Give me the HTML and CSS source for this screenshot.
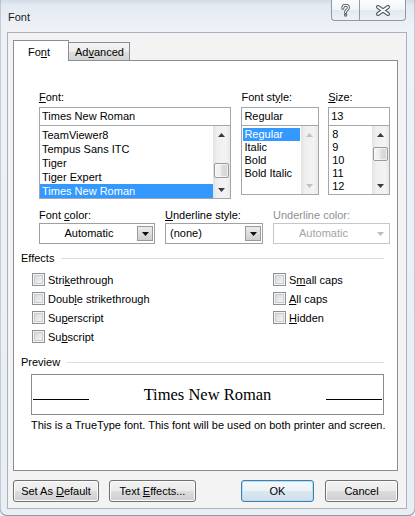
FILE: index.html
```html
<!DOCTYPE html>
<html>
<head>
<meta charset="utf-8">
<title>Font</title>
<link rel="stylesheet" href="styles.css">
</head>
<body>
<div class="window">
  <div class="titlebar">
    <span class="title">Font</span>
    <div class="caption">
      <div class="cbtn help">
        <svg width="9" height="13" viewBox="0 0 9 13">
          <path d="M1.8 4.2 C1.8 2.2 3 1.3 4.6 1.3 C6.3 1.3 7.4 2.3 7.4 3.8 C7.4 5.3 6 5.8 5.2 6.6 C4.7 7.1 4.6 7.6 4.6 8.4" fill="none" stroke="#56606c" stroke-width="3" stroke-linecap="round"/>
          <circle cx="4.6" cy="11" r="1.7" fill="#56606c"/>
          <path d="M1.8 4.2 C1.8 2.2 3 1.3 4.6 1.3 C6.3 1.3 7.4 2.3 7.4 3.8 C7.4 5.3 6 5.8 5.2 6.6 C4.7 7.1 4.6 7.6 4.6 8.4" fill="none" stroke="#ffffff" stroke-width="1.1" stroke-linecap="round"/>
          <circle cx="4.6" cy="11" r="0.6" fill="#ffffff"/>
        </svg>
      </div>
      <div class="cbtn close">
        <svg width="16" height="11" viewBox="0 0 16 11">
          <path d="M3 2 L13 9 M13 2 L3 9" fill="none" stroke="#56606c" stroke-width="4" stroke-linecap="round"/>
          <path d="M3 2 L13 9 M13 2 L3 9" fill="none" stroke="#ffffff" stroke-width="1.8" stroke-linecap="round"/>
        </svg>
      </div>
    </div>
  </div>

  <div class="client">
    <div class="tabs">
      <div class="tab active">Fo<u>n</u>t</div>
      <div class="tab">Ad<u>v</u>anced</div>
    </div>

    <div class="panel">
      <div class="fontsel">
        <div class="col col-font">
          <div class="lbl"><u>F</u>ont:</div>
          <div class="textbox">Times New Roman</div>
          <div class="listbox lb-font">
            <div class="items">
              <div class="item">TeamViewer8</div>
              <div class="item">Tempus Sans ITC</div>
              <div class="item">Tiger</div>
              <div class="item">Tiger Expert</div>
              <div class="item sel">Times New Roman</div>
            </div>
            <div class="vscroll">
              <div class="sb-btn"><svg width="7" height="4" viewBox="0 0 7 4"><polygon points="0,4 3.5,0 7,4" fill="#3a3a3a"/></svg></div>
              <div class="thumb thumb-font"></div>
              <div class="sb-fill"></div>
              <div class="sb-btn"><svg width="7" height="4" viewBox="0 0 7 4"><polygon points="0,0 7,0 3.5,4" fill="#3a3a3a"/></svg></div>
            </div>
          </div>
        </div>

        <div class="col col-style">
          <div class="lbl">Font st<u>y</u>le:</div>
          <div class="textbox">Regular</div>
          <div class="listbox lb-small">
            <div class="items">
              <div class="item sel">Regular</div>
              <div class="item">Italic</div>
              <div class="item">Bold</div>
              <div class="item">Bold Italic</div>
            </div>
            <div class="vscroll">
              <div class="sb-btn"><svg width="7" height="4" viewBox="0 0 7 4"><polygon points="0,4 3.5,0 7,4" fill="#c2c2c2"/></svg></div>
              <div class="sb-fill"></div>
              <div class="sb-btn"><svg width="7" height="4" viewBox="0 0 7 4"><polygon points="0,0 7,0 3.5,4" fill="#c2c2c2"/></svg></div>
            </div>
          </div>
        </div>

        <div class="col col-size">
          <div class="lbl"><u>S</u>ize:</div>
          <div class="textbox">13</div>
          <div class="listbox lb-small">
            <div class="items">
              <div class="item">8</div>
              <div class="item">9</div>
              <div class="item">10</div>
              <div class="item">11</div>
              <div class="item">12</div>
            </div>
            <div class="vscroll">
              <div class="sb-btn"><svg width="7" height="4" viewBox="0 0 7 4"><polygon points="0,4 3.5,0 7,4" fill="#3a3a3a"/></svg></div>
              <div class="thumb thumb-size"></div>
              <div class="sb-fill"></div>
              <div class="sb-btn"><svg width="7" height="4" viewBox="0 0 7 4"><polygon points="0,0 7,0 3.5,4" fill="#3a3a3a"/></svg></div>
            </div>
          </div>
        </div>
      </div>

      <div class="row2">
        <div class="dcol dcol-color">
          <div class="lbl">Font <u>c</u>olor:</div>
          <div class="dd">
            <div class="dd-text center">Automatic</div>
            <div class="dd-btn"><svg width="7" height="4" viewBox="0 0 7 4"><polygon points="0,0 7,0 3.5,4" fill="#111"/></svg></div>
          </div>
        </div>
        <div class="dcol dcol-ustyle">
          <div class="lbl"><u>U</u>nderline style:</div>
          <div class="dd">
            <div class="dd-text left">(none)</div>
            <div class="dd-btn"><svg width="7" height="4" viewBox="0 0 7 4"><polygon points="0,0 7,0 3.5,4" fill="#111"/></svg></div>
          </div>
        </div>
        <div class="dcol dcol-ucolor">
          <div class="lbl disabled">Underline color:</div>
          <div class="dd dd-disabled">
            <div class="dd-text center">Automatic</div>
            <div class="dd-btn"><svg width="7" height="4" viewBox="0 0 7 4"><polygon points="0,0 7,0 3.5,4" fill="#bdbdbd"/></svg></div>
          </div>
        </div>
      </div>

      <div class="group group-effects">Effects</div>
      <div class="effects">
        <div class="eff-col eff-left">
          <div class="check"><span class="cb"></span><span>Stri<u>k</u>ethrough</span></div>
          <div class="check"><span class="cb"></span><span>Doub<u>l</u>e strikethrough</span></div>
          <div class="check"><span class="cb"></span><span>Su<u>p</u>erscript</span></div>
          <div class="check"><span class="cb"></span><span>Su<u>b</u>script</span></div>
        </div>
        <div class="eff-col">
          <div class="check"><span class="cb"></span><span>S<u>m</u>all caps</span></div>
          <div class="check"><span class="cb"></span><span><u>A</u>ll caps</span></div>
          <div class="check"><span class="cb"></span><span><u>H</u>idden</span></div>
        </div>
      </div>

      <div class="group group-preview">Preview</div>
      <div class="preview">
        <span class="pv-line"></span>
        <span class="pv-text">Times New Roman</span>
        <span class="pv-line"></span>
      </div>
      <div class="desc">This is a TrueType font. This font will be used on both printer and screen.</div>
    </div>

    <div class="buttons">
      <div class="btn btn-default"><span>Set As <u>D</u>efault</span></div>
      <div class="btn btn-effects"><span>Text <u>E</u>ffects...</span></div>
      <div class="btn btn-ok"><span>OK</span></div>
      <div class="btn btn-cancel"><span>Cancel</span></div>
    </div>
  </div>
</div>
</body>
</html>
```

FILE: styles.css
```css
* {
  box-sizing: border-box;
}

html,
body {
  margin: 0;
  padding: 0;
}

body {
  width: 415px;
  height: 516px;
  overflow: hidden;
  background: #eef2f6;
  font-family: "Liberation Sans", Arial, sans-serif;
  font-size: 11px;
  line-height: 14px;
  color: #000;
}

u {
  text-decoration: underline;
  text-underline-offset: 1px;
}

/* ---------- window frame ---------- */
.window {
  width: 415px;
  height: 516px;
  display: flex;
  flex-direction: column;
  padding: 0 8px 7px 7px;
  background: linear-gradient(to bottom, #d3dbe4 0, #e4eaf1 5px, #eef2f7 28px, #e9eef4 100%);
  border-radius: 0 0 7px 7px;
  box-shadow: inset 0 -1px 0 rgba(40, 50, 60, 0.45), inset 1px 0 0 rgba(120, 135, 150, 0.35), inset -1px 0 0 rgba(120, 135, 150, 0.35);
}

.titlebar {
  height: 32px;
  display: flex;
  align-items: flex-start;
}

.title {
  padding: 10px 0 0 1px;
  line-height: 14px;
  color: #1b1b1b;
}

.caption {
  margin-left: auto;
  margin-right: 1px;
  display: flex;
  height: 21px;
}

.cbtn {
  height: 21px;
  border: 1px solid #8d9aab;
  border-top: none;
  background: linear-gradient(to bottom, #fbfcfd 0, #f1f4f8 50%, #e4e9ef 50%, #eef2f6 100%);
  display: flex;
  align-items: center;
  justify-content: center;
}

.help {
  width: 28px;
  border-right: none;
  border-radius: 0 0 0 4px;
}

.close {
  width: 47px;
  border-radius: 0 0 4px 0;
}

/* ---------- client area ---------- */
.client {
  flex: 1;
  display: flex;
  flex-direction: column;
  background: #f3f3f3;
  border: 1px solid #a9b3bf;
  padding: 7px 8px 6px 5px;
}

.tabs {
  display: flex;
  align-items: flex-end;
  height: 21px;
  margin-bottom: -1px;
  position: relative;
  z-index: 1;
}

.tab {
  width: 62px;
  height: 18px;
  margin-bottom: 1px;
  margin-left: -1px;
  border: 1px solid #898c95;
  border-bottom: none;
  background: linear-gradient(to bottom, #f4f4f4 0, #ececec 50%, #dedede 50%, #d4d4d4 100%);
  padding: 2px 0 0 6px;
  line-height: 14px;
  white-space: nowrap;
}

.tab.active {
  width: 56px;
  height: 21px;
  margin-bottom: 0;
  margin-left: 0;
  background: #fff;
  padding: 4px 0 0 14px;
  position: relative;
  z-index: 2;
}

.panel {
  height: 411px;
  border: 1px solid #898c95;
  background: #fff;
  padding: 0 7px;
}

/* ---------- font selection ---------- */
.fontsel {
  display: flex;
  align-items: flex-start;
  padding-top: 29px;
  margin-left: 18px;
}

.col-font {
  width: 193px;
}

.col-style {
  width: 78px;
  margin-left: 10px;
}

.col-size {
  width: 62px;
  margin-left: 9px;
}

.lbl {
  height: 14px;
  margin-bottom: 3px;
  white-space: nowrap;
}

.lbl.disabled {
  color: #8f8f8f;
}

.textbox {
  height: 19px;
  border: 1px solid #a3a7ad;
  padding-left: 2px;
  line-height: 17px;
  white-space: nowrap;
  overflow: hidden;
  background: #fff;
}

.listbox {
  margin-top: -1px;
  display: flex;
  border: 1px solid #a3a7ad;
  background: #fff;
  overflow: hidden;
}

.lb-font {
  height: 74px;
}

.lb-small {
  height: 70px;
}

.items {
  flex: 1;
  min-width: 0;
  padding-top: 2px;
  overflow: hidden;
}

.item {
  height: 14px;
  line-height: 14px;
  padding-left: 2px;
  white-space: nowrap;
}

.lb-small .item {
  height: 13px;
  line-height: 13px;
  margin: 0 1px;
  padding-left: 1px;
}

.col-size .item {
  padding-left: 2px;
}

.item.sel {
  background: #3399ff;
  color: #fff;
}

.vscroll {
  width: 17px;
  display: flex;
  flex-direction: column;
  background: linear-gradient(to right, #e2e2e2 0, #efefef 25%, #f3f3f3 75%, #e9e9e9 100%);
}

.sb-btn {
  height: 17px;
  flex: none;
  display: flex;
  align-items: center;
  justify-content: center;
}

.sb-fill {
  flex: 1;
}

.thumb {
  flex: none;
  margin-left: 1px;
  margin-right: 1px;
  border: 1px solid #9a9a9a;
  border-radius: 2px;
  background: linear-gradient(to right, #f5f5f5 0, #ececec 45%, #dcdcdc 55%, #d6d6d6 100%);
  box-shadow: inset 0 0 0 1px rgba(255, 255, 255, 0.6);
}

.thumb-font {
  height: 15px;
  margin-top: 20px;
}

.thumb-size {
  height: 14px;
  margin-top: 4px;
}

/* ---------- dropdown row ---------- */
.row2 {
  display: flex;
  margin: 9px 0 0 18px;
}

.dcol-color {
  width: 116px;
}

.dcol-ustyle {
  width: 98px;
  margin-left: 10px;
}

.dcol-ucolor {
  width: 117px;
  margin-left: 10px;
}

.dcol .lbl {
  margin-bottom: 1px;
}

.dd {
  height: 21px;
  border: 1px solid #a0a0a0;
  background: #fff;
  display: flex;
  padding: 2px 1px;
}

.dd-text {
  flex: 1;
  line-height: 15px;
  white-space: nowrap;
}

.dd-text.center {
  text-align: center;
}

.dd-text.left {
  padding-left: 3px;
}

.dd-btn {
  width: 16px;
  height: 15px;
  border: 1px solid #9a9a9a;
  background: linear-gradient(to bottom, #ececec 0, #dcdcdc 50%, #cfcfcf 100%);
  display: flex;
  align-items: center;
  justify-content: center;
}

.dd-disabled {
  border-color: #c3c6ca;
}

.dd-disabled .dd-text {
  color: #a3a3a3;
}

.dd-disabled .dd-btn {
  border: none;
  background: none;
}

/* ---------- group headers ---------- */
.group {
  display: flex;
  align-items: center;
  height: 14px;
  white-space: nowrap;
}

.group::after {
  content: "";
  flex: 1;
  height: 1px;
  background: #d5dfe5;
  margin-left: 7px;
  margin-right: 6px;
}

.group-effects {
  margin-top: 7px;
}

.group-preview {
  margin-top: 9px;
}

/* ---------- effects ---------- */
.effects {
  display: flex;
  margin: 5px 0 0 11px;
}

.eff-col {
  display: flex;
  flex-direction: column;
}

.eff-left {
  width: 241px;
}

.check {
  height: 19px;
  display: flex;
  align-items: center;
  white-space: nowrap;
}

.cb {
  width: 13px;
  height: 13px;
  flex: none;
  margin-right: 3px;
  border: 1px solid #8e8f8f;
  background: linear-gradient(135deg, #cfd2d7 0, #e6e7e9 50%, #f9f9f9 100%);
  box-shadow: inset 0 0 0 1px #f4f4f4, inset 0 0 0 2px #c9ccd1;
}

/* ---------- preview ---------- */
.preview {
  height: 41px;
  margin: 5px 6px 0 10px;
  border: 1px solid #8a8a8a;
  display: flex;
  align-items: baseline;
  justify-content: space-between;
  padding: 10px 1px 0;
}

.pv-line {
  width: 56px;
  height: 1px;
  background: #000;
}

.pv-text {
  font-family: "Liberation Serif", "Times New Roman", serif;
  font-size: 16.5px;
  line-height: 20px;
  white-space: nowrap;
}

.desc {
  margin: 3px 0 0 10px;
  white-space: nowrap;
}

/* ---------- buttons ---------- */
.buttons {
  display: flex;
  height: 22px;
  margin-top: 9px;
}

.btn {
  height: 22px;
  border: 1px solid #707070;
  border-radius: 3px;
  background: linear-gradient(to bottom, #f2f2f2 0, #ebebeb 50%, #dddddd 50%, #cfcfcf 100%);
  box-shadow: inset 0 0 0 1px #fbfbfb;
  display: flex;
  align-items: center;
  justify-content: center;
  white-space: nowrap;
}

.btn-default {
  width: 86px;
}

.btn-effects {
  width: 87px;
  margin-left: 10px;
}

.btn-ok {
  width: 73px;
  margin-left: auto;
  border-color: #3c7fb1;
  background: linear-gradient(to bottom, #f4f9fc 0, #eaf2f8 50%, #dbe8f1 50%, #cfdfea 100%);
  box-shadow: inset 0 0 0 1px #b9dcf2;
}

.btn-cancel {
  width: 73px;
  margin-left: 11px;
}
```
